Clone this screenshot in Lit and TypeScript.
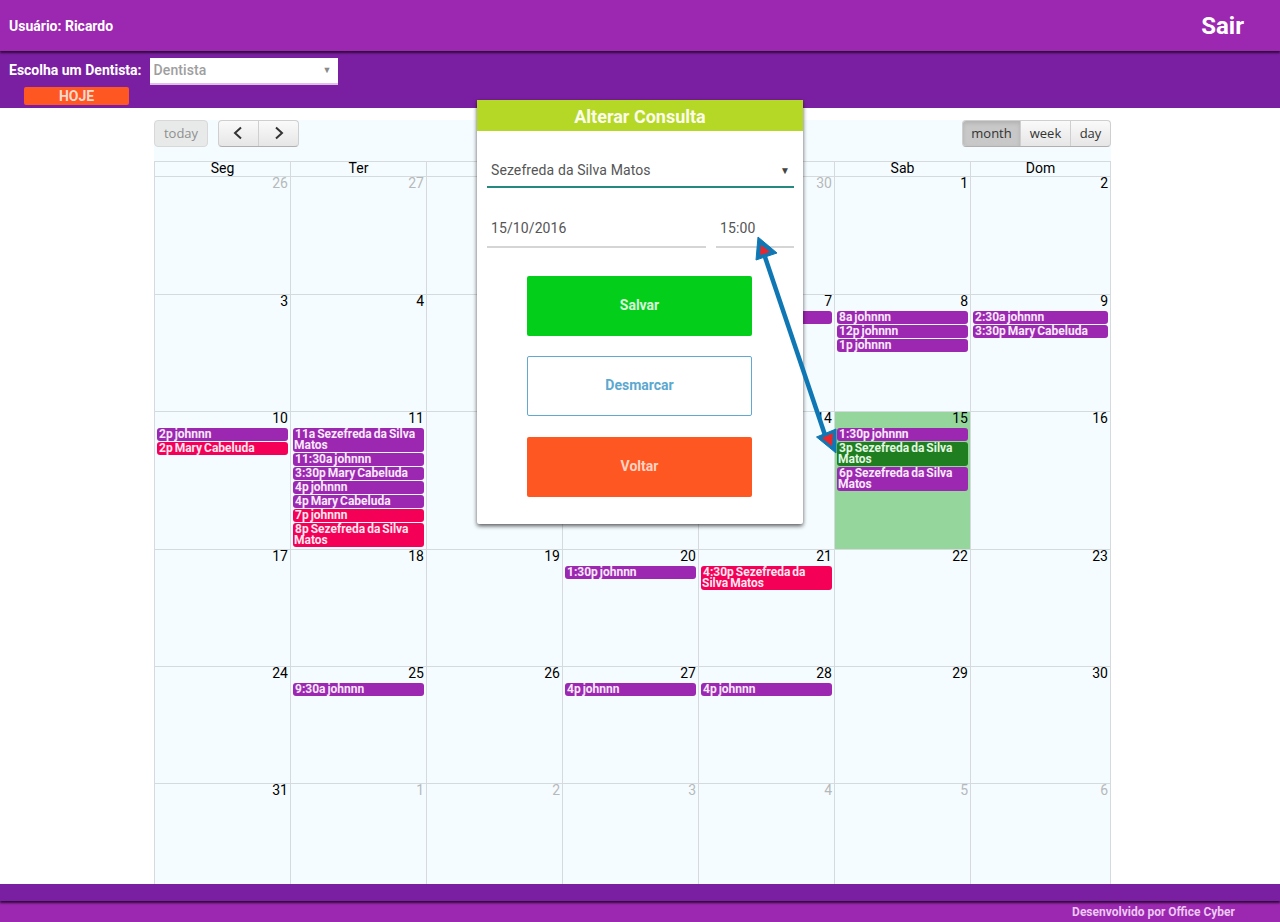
import { LitElement, html, css, nothing } from 'lit';
import { customElement } from 'lit/decorators.js';

type CalEvent = { time: string; title: string; color?: 'pink' | 'green' };
type Day = { n: number; muted?: boolean; today?: boolean; events?: CalEvent[] };

const SEZEFREDA = 'Sezefreda da Silva Matos';
const MARY = 'Mary Cabeluda';
const JOHN = 'johnnn';

const HEADS = ['Seg', 'Ter', 'Qua', 'Qui', 'Sex', 'Sab', 'Dom'];

const WEEKS: Day[][] = [
  [
    { n: 26, muted: true },
    { n: 27, muted: true },
    { n: 28, muted: true },
    { n: 29, muted: true },
    { n: 30, muted: true },
    { n: 1 },
    { n: 2 },
  ],
  [
    { n: 3 },
    { n: 4 },
    { n: 5 },
    { n: 6 },
    { n: 7, events: [{ time: '10a', title: JOHN }] },
    {
      n: 8,
      events: [
        { time: '8a', title: JOHN },
        { time: '12p', title: JOHN },
        { time: '1p', title: JOHN },
      ],
    },
    {
      n: 9,
      events: [
        { time: '2:30a', title: JOHN },
        { time: '3:30p', title: MARY },
      ],
    },
  ],
  [
    {
      n: 10,
      events: [
        { time: '2p', title: JOHN },
        { time: '2p', title: MARY, color: 'pink' },
      ],
    },
    {
      n: 11,
      events: [
        { time: '11a', title: SEZEFREDA },
        { time: '11:30a', title: JOHN },
        { time: '3:30p', title: MARY },
        { time: '4p', title: JOHN },
        { time: '4p', title: MARY },
        { time: '7p', title: JOHN, color: 'pink' },
        { time: '8p', title: SEZEFREDA, color: 'pink' },
      ],
    },
    { n: 12 },
    { n: 13 },
    { n: 14 },
    {
      n: 15,
      today: true,
      events: [
        { time: '1:30p', title: JOHN },
        { time: '3p', title: SEZEFREDA, color: 'green' },
        { time: '6p', title: SEZEFREDA },
      ],
    },
    { n: 16 },
  ],
  [
    { n: 17 },
    { n: 18 },
    { n: 19 },
    { n: 20, events: [{ time: '1:30p', title: JOHN }] },
    { n: 21, events: [{ time: '4:30p', title: SEZEFREDA, color: 'pink' }] },
    { n: 22 },
    { n: 23 },
  ],
  [
    { n: 24 },
    { n: 25, events: [{ time: '9:30a', title: JOHN }] },
    { n: 26 },
    { n: 27, events: [{ time: '4p', title: JOHN }] },
    { n: 28, events: [{ time: '4p', title: JOHN }] },
    { n: 29 },
    { n: 30 },
  ],
  [
    { n: 31 },
    { n: 1, muted: true },
    { n: 2, muted: true },
    { n: 3, muted: true },
    { n: 4, muted: true },
    { n: 5, muted: true },
    { n: 6, muted: true },
  ],
];

@customElement('app-root')
export class AppRoot extends LitElement {
  static styles = css`
    :host {
      display: flex;
      flex-direction: column;
      position: relative;
      height: 922px;
      overflow: hidden;
      background: #fff;
      font-family: Roboto, sans-serif;
      color: #000;
    }

    /* --- Top bars --- */
    .topbar {
      flex: none;
      height: 51px;
      box-sizing: border-box;
      display: flex;
      align-items: center;
      justify-content: space-between;
      padding: 1px 36px 0 9px;
      background: #9c27b0;
      color: #fff;
      font-weight: 700;
      font-size: 14px;
      box-shadow: 0 2px 2px #2f0a38;
      position: relative;
      z-index: 1;
    }
    .logout {
      font-size: 24px;
    }
    .subbar {
      flex: none;
      height: 57px;
      box-sizing: border-box;
      padding-top: 7px;
      background: #7b1fa2;
      color: #fff;
      font-weight: 700;
      font-size: 14px;
    }
    .chooser {
      display: flex;
      align-items: center;
      padding-left: 9px;
      gap: 8px;
    }
    .chooser-label {
      padding-bottom: 3px;
    }
    .chooser-select {
      width: 188px;
      height: 27px;
      box-sizing: border-box;
      display: flex;
      align-items: center;
      justify-content: space-between;
      padding: 0 6px 1px 4px;
      background: #fff;
      border-bottom: 2px solid #e1bee7;
      color: #9e9e9e;
      font-weight: 500;
      letter-spacing: 0.1px;
    }
    .caret {
      font-size: 9px;
      color: #8a8a8a;
    }
    .today-link {
      width: 105px;
      height: 18px;
      box-sizing: border-box;
      padding-bottom: 1px;
      margin: 2px 0 0 24px;
      display: flex;
      align-items: center;
      justify-content: center;
      border-radius: 2px;
      background: #ff5722;
      color: #ffd9cc;
    }

    /* --- Calendar --- */
    .main {
      flex: 1;
      min-height: 0;
      overflow: hidden;
      padding: 12px 169px 0 154px;
    }
    .calendar {
      width: 957px;
      background: #f5fcff;
    }
    .toolbar {
      display: flex;
      justify-content: space-between;
      height: 41px;
      font-family: 'Open Sans', sans-serif;
      font-size: 13px;
    }
    .tool-left {
      display: flex;
      gap: 10px;
    }
    .btn-group {
      display: flex;
      height: 27px;
      box-sizing: border-box;
      border: 1px solid #cfcfcf;
      border-bottom-color: #b0b0b0;
      border-radius: 4px;
      overflow: hidden;
      background: linear-gradient(#fafafa, #e6e6e6);
      color: #333;
    }
    .btn {
      display: flex;
      align-items: center;
      justify-content: center;
      box-sizing: border-box;
      height: 100%;
      padding-bottom: 1px;
    }
    .btn + .btn {
      border-left: 1px solid #cfcfcf;
    }
    .today-btn {
      width: 54px;
      color: #8f8f8f;
      background: #e8eaea;
      border-color: #d8d8d8;
    }
    .today-inner {
      width: 100%;
    }
    .prev-btn {
      width: 39px;
      padding-right: 1px;
    }
    .next-btn {
      width: 40px;
    }
    .month-btn {
      width: 57px;
      background: #c8c8c8;
      box-shadow: inset 0 2px 4px rgba(0, 0, 0, 0.12);
    }
    .week-btn {
      width: 50px;
    }
    .day-btn {
      width: 40px;
    }

    .grid {
      border-left: 1px solid #d5dbdc;
    }
    .row {
      display: grid;
      grid-template-columns: repeat(6, 136px) 140px;
      border-top: 1px solid #d5dbdc;
    }
    .head {
      height: 14px;
      line-height: 13px;
      text-align: center;
      font-size: 14px;
      font-weight: 400;
      border-right: 1px solid #d5dbdc;
    }
    .cell {
      min-height: 116px;
      box-sizing: border-box;
      border-right: 1px solid #d5dbdc;
      padding-bottom: 2px;
    }
    .row.first .cell {
      min-height: 117px;
    }
    .cell.today {
      background: #94d69c;
    }
    .num {
      height: 15px;
      line-height: 13px;
      padding-right: 2px;
      text-align: right;
      font-size: 14px;
    }
    .num.muted {
      color: #b5b9bb;
    }
    .events {
      display: flex;
      flex-direction: column;
      gap: 1px;
      margin: 1px 2px 0 2px;
    }
    .event {
      box-sizing: border-box;
      padding: 1px;
      border-radius: 3px;
      background: #9c27b0;
      color: #f8e9fb;
      font-size: 12px;
      font-weight: 700;
      line-height: 11px;
      word-spacing: -1px;
    }
    .event.pink {
      background: #f50057;
      color: #ffe6ef;
    }
    .event.green {
      background: #1f7e20;
      color: #e2f7e2;
    }
    .time {
      margin-left: 1px;
    }

    /* --- Footer --- */
    .footbar {
      flex: none;
      height: 17px;
      background: #7b1fa2;
      box-shadow: 0 2px 2px #2f0a38;
      position: relative;
      z-index: 1;
    }
    .footer {
      flex: none;
      height: 21px;
      box-sizing: border-box;
      padding: 4px 45px 0 0;
      text-align: right;
      background: #9c27b0;
      color: #ecc7f3;
      font-size: 12px;
      font-weight: 700;
    }

    /* --- Dialog --- */
    .dialog {
      position: absolute;
      left: 477px;
      top: 100px;
      width: 326px;
      height: 424px;
      background: #fff;
      border-radius: 0 0 2px 2px;
      box-shadow: 0 2px 4px rgba(0, 0, 0, 0.65);
      z-index: 2;
    }
    .dialog-title {
      height: 31px;
      line-height: 33px;
      text-align: center;
      background: #b5d726;
      color: #fbfdea;
      font-size: 18px;
      font-weight: 700;
    }
    .dialog-body {
      padding: 23px 9px 0 10px;
      color: #555;
      font-size: 14px;
      letter-spacing: 0.1px;
    }
    .field {
      box-sizing: border-box;
      height: 34px;
      display: flex;
      align-items: center;
      justify-content: space-between;
      padding: 0 4px 0 4px;
      border-bottom: 2px solid #d5d5d5;
    }
    .field.active {
      border-bottom-color: #26897f;
    }
    .field-caret {
      font-size: 10px;
      color: #444;
    }
    .when {
      display: flex;
      gap: 10px;
      margin-top: 26px;
    }
    .when .field {
      padding-bottom: 4px;
    }
    .when .date {
      width: 219px;
    }
    .when .hour {
      width: 78px;
    }
    .actions {
      display: flex;
      flex-direction: column;
      gap: 20px;
      margin: 28px 0 0 40px;
      width: 225px;
    }
    .action {
      height: 60px;
      box-sizing: border-box;
      padding-bottom: 2px;
      display: flex;
      align-items: center;
      justify-content: center;
      border-radius: 2px;
      font-weight: 700;
      letter-spacing: 0;
    }
    .save {
      background: #03cf1b;
      color: #d8f7dc;
    }
    .cancel {
      background: #fff;
      border: 1px solid #63a9cf;
      color: #5ca8cf;
    }
    .back {
      margin-top: 1px;
      background: #ff5722;
      color: #ffd3c3;
    }

    /* --- Annotation arrow --- */
    .arrow {
      position: absolute;
      left: 740px;
      top: 225px;
      z-index: 3;
    }
  `;

  private renderEvent(ev: CalEvent) {
    return html`<div class="event ${ev.color ?? ''}">
      <span class="time">${ev.time}</span> ${ev.title}
    </div>`;
  }

  private renderDay(day: Day) {
    return html`<div class="cell ${day.today ? 'today' : ''}">
      <div class="num ${day.muted ? 'muted' : ''}">${day.n}</div>
      ${day.events
        ? html`<div class="events">${day.events.map((e) => this.renderEvent(e))}</div>`
        : nothing}
    </div>`;
  }

  render() {
    return html`
      <div class="topbar">
        <span>Usuário: Ricardo</span>
        <span class="logout">Sair</span>
      </div>
      <div class="subbar">
        <div class="chooser">
          <span class="chooser-label">Escolha um Dentista:</span>
          <div class="chooser-select"><span>Dentista</span><span class="caret">▼</span></div>
        </div>
        <div class="today-link">HOJE</div>
      </div>

      <div class="main">
        <div class="calendar">
          <div class="toolbar">
            <div class="tool-left">
              <div class="btn-group today-btn"><div class="btn today-inner">today</div></div>
              <div class="btn-group">
                <div class="btn prev-btn">
                  <svg width="12" height="14" viewBox="0 0 12 14" fill="none" stroke="#333" stroke-width="2">
                    <path d="M9 1.5 3 7l6 5.5" />
                  </svg>
                </div>
                <div class="btn next-btn">
                  <svg width="12" height="14" viewBox="0 0 12 14" fill="none" stroke="#333" stroke-width="2">
                    <path d="M3 1.5 9 7l-6 5.5" />
                  </svg>
                </div>
              </div>
            </div>
            <div class="btn-group">
              <div class="btn month-btn">month</div>
              <div class="btn week-btn">week</div>
              <div class="btn day-btn">day</div>
            </div>
          </div>
          <div class="grid">
            <div class="row">${HEADS.map((h) => html`<div class="head">${h}</div>`)}</div>
            ${WEEKS.map(
              (w, i) => html`<div class="row ${i === 0 ? 'first' : ''}">${w.map((d) => this.renderDay(d))}</div>`
            )}
          </div>
        </div>
      </div>

      <div class="footbar"></div>
      <div class="footer">Desenvolvido por Office Cyber</div>

      <div class="dialog">
        <div class="dialog-title">Alterar Consulta</div>
        <div class="dialog-body">
          <div class="field active"><span>${SEZEFREDA}</span><span class="field-caret">▼</span></div>
          <div class="when">
            <div class="field date">15/10/2016</div>
            <div class="field hour">15:00</div>
          </div>
          <div class="actions">
            <div class="action save">Salvar</div>
            <div class="action cancel">Desmarcar</div>
            <div class="action back">Voltar</div>
          </div>
        </div>
      </div>

      <svg class="arrow" width="110" height="240" viewBox="740 225 110 240">
        <path d="M765 257 827 441" fill="none" stroke="#0f78b4" stroke-width="4.500" />
        <path d="M758 237 777 253 756 260Z" fill="#0f78b4" stroke="#0f78b4" stroke-width="1" stroke-linejoin="round" />
        <path d="M761 245 770 252 760 255Z" fill="#e8262c" />
        <path d="M816.500 437 836 429 836 453Z" fill="#0f78b4" stroke="#0f78b4" stroke-width="1" stroke-linejoin="round" />
        <path d="M822 438 833 433 832 446Z" fill="#e8262c" />
      </svg>
    `;
  }
}

declare global {
  interface HTMLElementTagNameMap {
    'app-root': AppRoot;
  }
}
